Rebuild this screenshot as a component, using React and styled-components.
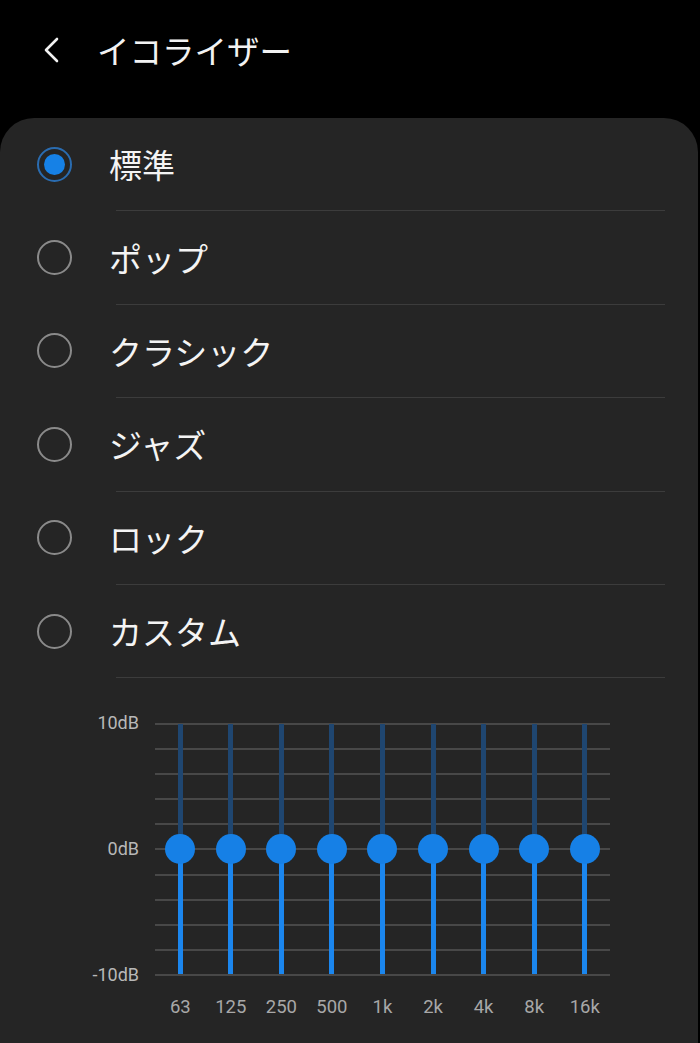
import React from "react";
import styled, { createGlobalStyle } from "styled-components";

const presets = ["標準", "ポップ", "クラシック", "ジャズ", "ロック", "カスタム"];
const bands = ["63", "125", "250", "500", "1k", "2k", "4k", "8k", "16k"];

function App() {
  return (
    <Page>
      <GlobalStyle />
      <Header>
        <BackButton>
          <svg width="20" height="26" viewBox="0 0 20 26" fill="none">
            <path d="M15 2 L4 13 L15 24" stroke="#f2f2f2" strokeWidth="2.6" strokeLinecap="round" strokeLinejoin="round" />
          </svg>
        </BackButton>
        <Title>イコライザー</Title>
      </Header>
      <Card>
        {presets.map((name, i) => (
          <React.Fragment key={name}>
            <Row>
              <Radio checked={i === 0} />
              <Label>{name}</Label>
            </Row>
            <Divider />
          </React.Fragment>
        ))}
        <Chart>
          <Axis>
            <span>10dB</span>
            <span>0dB</span>
            <span>-10dB</span>
          </Axis>
          <PlotColumn>
            <Plot>
              {bands.map((b) => (
                <Band key={b}>
                  <Track upper />
                  <Thumb />
                  <Track />
                </Band>
              ))}
            </Plot>
            <Freqs>
              {bands.map((b) => (
                <span key={b}>{b}</span>
              ))}
            </Freqs>
          </PlotColumn>
        </Chart>
      </Card>
    </Page>
  );
}

export default App;

const GlobalStyle = createGlobalStyle`
  html, body {
    margin: 0;
    padding: 0;
    background: #000;
  }
  body {
    font-family: Roboto, "Noto Sans CJK JP", sans-serif;
    color: #f2f2f2;
  }
`;

const Page = styled.div`
  width: 700px;
  height: 1043px;
  overflow: hidden;
  background: #000;
  display: flex;
  flex-direction: column;
`;

const Header = styled.div`
  height: 118px;
  display: flex;
  align-items: flex-start;
  padding: 32px 0 0 42px;
  box-sizing: border-box;
`;

const BackButton = styled.div`
  width: 24px;
  height: 36px;
  display: flex;
  align-items: center;
  margin-right: 31px;
`;

const Title = styled.div`
  font-family: "Noto Sans CJK JP", sans-serif;
  font-size: 32.5px;
  line-height: 36px;
  color: #f2f2f2;
`;

const Card = styled.div`
  flex: 1;
  margin-right: 2px;
  background: #252525;
  border-radius: 34px 34px 0 0;
  display: flex;
  flex-direction: column;
`;

const Row = styled.div`
  height: 92.4px;
  display: flex;
  align-items: center;
  padding-left: 37px;
`;

const Radio = styled.div`
  width: 35px;
  height: 35px;
  box-sizing: border-box;
  border-radius: 50%;
  border: 2px solid ${(p) => (p.checked ? "#2a6cb0" : "#8a8a8a")};
  display: flex;
  align-items: center;
  justify-content: center;
  flex-shrink: 0;
  &::after {
    content: "";
    display: ${(p) => (p.checked ? "block" : "none")};
    width: 21px;
    height: 21px;
    border-radius: 50%;
    background: #1681e6;
  }
`;

const Label = styled.div`
  margin-left: 37px;
  font-family: "Noto Sans CJK JP", sans-serif;
  font-size: 33px;
  line-height: 40px;
  color: #f4f4f4;
`;

const Divider = styled.div`
  height: 1px;
  margin: 0 33px 0 116px;
  background: #3c3c3c;
`;

const Chart = styled.div`
  display: flex;
  margin-top: 34px;
`;

const Axis = styled.div`
  width: 139px;
  height: 274px;
  display: flex;
  flex-direction: column;
  justify-content: space-between;
  align-items: flex-end;
  font-size: 18px;
  line-height: 22px;
  color: #b8b8b8;
  span {
    display: block;
  }
`;

const PlotColumn = styled.div`
  margin-left: 16px;
  width: 455px;
  padding-top: 11px;
`;

const Plot = styled.div`
  height: 253px;
  display: grid;
  grid-template-columns: repeat(9, 1fr);
  background: repeating-linear-gradient(
    to bottom,
    #484848 0,
    #484848 2px,
    transparent 2px,
    transparent 25.1px
  );
`;

const Band = styled.div`
  display: flex;
  flex-direction: column;
  align-items: center;
  padding: 1px 0 2px;
`;

const Track = styled.div`
  flex: 1;
  width: 5px;
  background: ${(p) => (p.upper ? "#1f4670" : "#1b86ee")};
`;

const Thumb = styled.div`
  width: 30px;
  height: 30px;
  border-radius: 50%;
  background: #1680e6;
  margin: -14px 0;
  position: relative;
  z-index: 1;
  flex-shrink: 0;
`;

const Freqs = styled.div`
  display: grid;
  grid-template-columns: repeat(9, 1fr);
  margin-top: 20px;
  font-size: 18.5px;
  line-height: 22px;
  color: #a8a8a8;
  text-align: center;
`;
